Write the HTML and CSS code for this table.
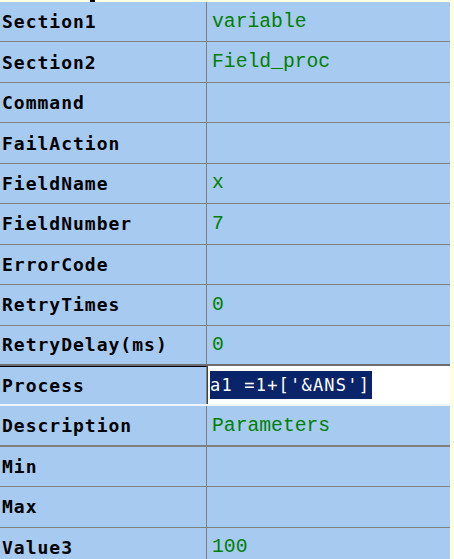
FILE: index.html
```html
<!DOCTYPE html>
<html lang="en">
<head>
  <meta charset="UTF-8" />
  <title>Property Grid</title>
  <link rel="stylesheet" href="styles.css">
</head>
<body>
  <div class="top-strip"><span class="cut-mark"></span></div>

  <div class="grid">
    <div class="row"><div class="label">Section1</div><div class="value">variable</div></div>
    <div class="row"><div class="label">Section2</div><div class="value">Field_proc</div></div>
    <div class="row"><div class="label">Command</div><div class="value"></div></div>
    <div class="row"><div class="label">FailAction</div><div class="value"></div></div>
    <div class="row"><div class="label">FieldName</div><div class="value">x</div></div>
    <div class="row"><div class="label">FieldNumber</div><div class="value">7</div></div>
    <div class="row"><div class="label">ErrorCode</div><div class="value"></div></div>
    <div class="row"><div class="label">RetryTimes</div><div class="value">0</div></div>
    <div class="row row-before-edit"><div class="label">RetryDelay(ms)</div><div class="value">0</div></div>
    <div class="row row-edit">
      <div class="label">Process</div>
      <div class="value editor"><span class="selection">a1 =1+['&amp;ANS']</span></div>
    </div>
    <div class="row row-thick"><div class="label">Description</div><div class="value">Parameters</div></div>
    <div class="row"><div class="label">Min</div><div class="value"></div></div>
    <div class="row"><div class="label">Max</div><div class="value"></div></div>
    <div class="row"><div class="label">Value3</div><div class="value">100</div></div>
  </div>
</body>
</html>
```

FILE: styles.css
```css
body {
  margin: 0;
  background-color: #ffffe1;
  overflow: hidden;
}

.top-strip {
  height: 2px;
  display: flex;
}

.cut-mark {
  display: block;
  width: 5px;
  height: 2px;
  margin-left: 90px;
  background-color: #000;
}

.grid {
  width: 450px;
  background-color: #a6caf0;
}

.row {
  display: grid;
  grid-template-columns: 207px 1fr;
  height: 40.45px;
  box-sizing: border-box;
  border-bottom: 1px solid #808080;
}

.label, .value {
  display: flex;
  align-items: center;
  white-space: nowrap;
  overflow: hidden;
}

.label {
  padding-left: 2px;
  border-right: 1px solid #808080;
  font-family: "DejaVu Sans Mono", monospace;
  font-weight: bold;
  font-size: 18px;
  letter-spacing: 1px;
  color: #000;
}

.value {
  padding-left: 5px;
  font-family: "Liberation Mono", monospace;
  font-size: 19.7px;
  color: #008000;
}

/* row being edited */
.row-before-edit {
  border-bottom: 2px solid #6e6e6e;
}

.row-edit {
  border-bottom: 2px solid #eef4fb;
}

.row-edit .label {
  border-top: 1px solid #000;
}

.editor {
  background-color: #fff;
  padding-left: 2px;
  border-left: 1px solid #404040;
}

.selection {
  background-color: #0a246a;
  color: #fff;
  font-family: "DejaVu Sans Mono", monospace;
  font-size: 17px;
  letter-spacing: 1.2px;
  line-height: 28px;
  padding-right: 2px;
}

.row-thick {
  border-bottom: 2px solid #808080;
}
```
